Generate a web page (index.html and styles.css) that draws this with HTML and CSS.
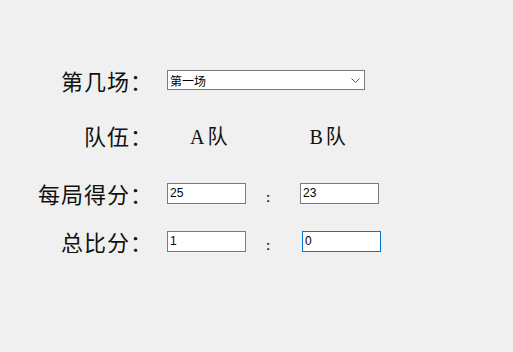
FILE: index.html
```html
<!DOCTYPE html>
<html lang="zh">
<head>
    <meta charset="UTF-8">
    <meta name="viewport" content="width=device-width, initial-scale=1.0">
    <title>比分录入</title>
    <link rel="stylesheet" href="styles.css">
</head>
<body>

    <div class="form">
        <div class="row row-match">
            <label class="label">第几场：</label>
            <div class="select-box">
                <span>第一场</span>
                <svg class="chevron" width="9" height="5" viewBox="0 0 9 5">
                    <path d="M0.5 0.5 L4.5 4.5 L8.5 0.5" fill="none" stroke="#555" stroke-width="1"/>
                </svg>
            </div>
        </div>

        <div class="row row-teams">
            <label class="label">队伍：</label>
            <span class="team team-a"><b>A</b>队</span>
            <span class="team team-b"><b>B</b>队</span>
        </div>

        <div class="row row-games">
            <label class="label">每局得分：</label>
            <input type="text" class="score" value="25">
            <span class="colon">:</span>
            <input type="text" class="score" value="23">
        </div>

        <div class="row row-total">
            <label class="label">总比分：</label>
            <input type="text" class="score" value="1">
            <span class="colon">:</span>
            <input type="text" class="score score-focus" value="0">
        </div>
    </div>

</body>
</html>
```

FILE: styles.css
```css
body {
    margin: 0;
    background-color: #f0f0f0;
    font-family: "Noto Sans CJK SC", sans-serif;
}
.form {
    padding-top: 68px;
}
.row {
    display: flex;
    align-items: center;
    height: 24px;
}
.row-teams {
    margin-top: 31px;
}
.row-games {
    margin-top: 34px;
}
.row-total {
    margin-top: 24px;
}
.label {
    width: 153px;
    margin-right: 14px;
    text-align: right;
    font-size: 22px;
    line-height: 24px;
    letter-spacing: 1px;
    color: #111;
    white-space: nowrap;
}
.select-box {
    box-sizing: border-box;
    width: 198px;
    height: 20px;
    align-self: flex-start;
    margin-top: 2px;
    border: 1px solid #7a7a7a;
    background: #fff;
    display: flex;
    align-items: center;
    justify-content: space-between;
    padding: 0 4px 0 2px;
    font-size: 12px;
    color: #000;
}
.chevron {
    margin-top: 1px;
}
.team {
    font-size: 20px;
    line-height: 24px;
    margin-top: 3px;
    color: #111;
}
.team b {
    font-family: "Liberation Serif", serif;
    font-weight: normal;
    margin-right: 3px;
}
.team-a {
    margin-left: 23px;
}
.team-b {
    margin-left: 82px;
}
.score {
    box-sizing: border-box;
    width: 79px;
    height: 21px;
    margin: 0;
    padding: 0 2px;
    border: 1px solid #7a7a7a;
    background: #fff;
    font-family: "Liberation Sans", Arial, sans-serif;
    font-size: 12px;
    color: #000;
    outline: none;
}
.score-focus {
    margin-left: 2px;
    border-color: #0078d7;
}
.colon {
    width: 54px;
    padding-left: 20px;
    box-sizing: border-box;
    margin-top: 9px;
    font-family: "Liberation Sans", Arial, sans-serif;
    font-size: 13px;
    font-weight: bold;
    line-height: 14px;
    color: #222;
}
```
